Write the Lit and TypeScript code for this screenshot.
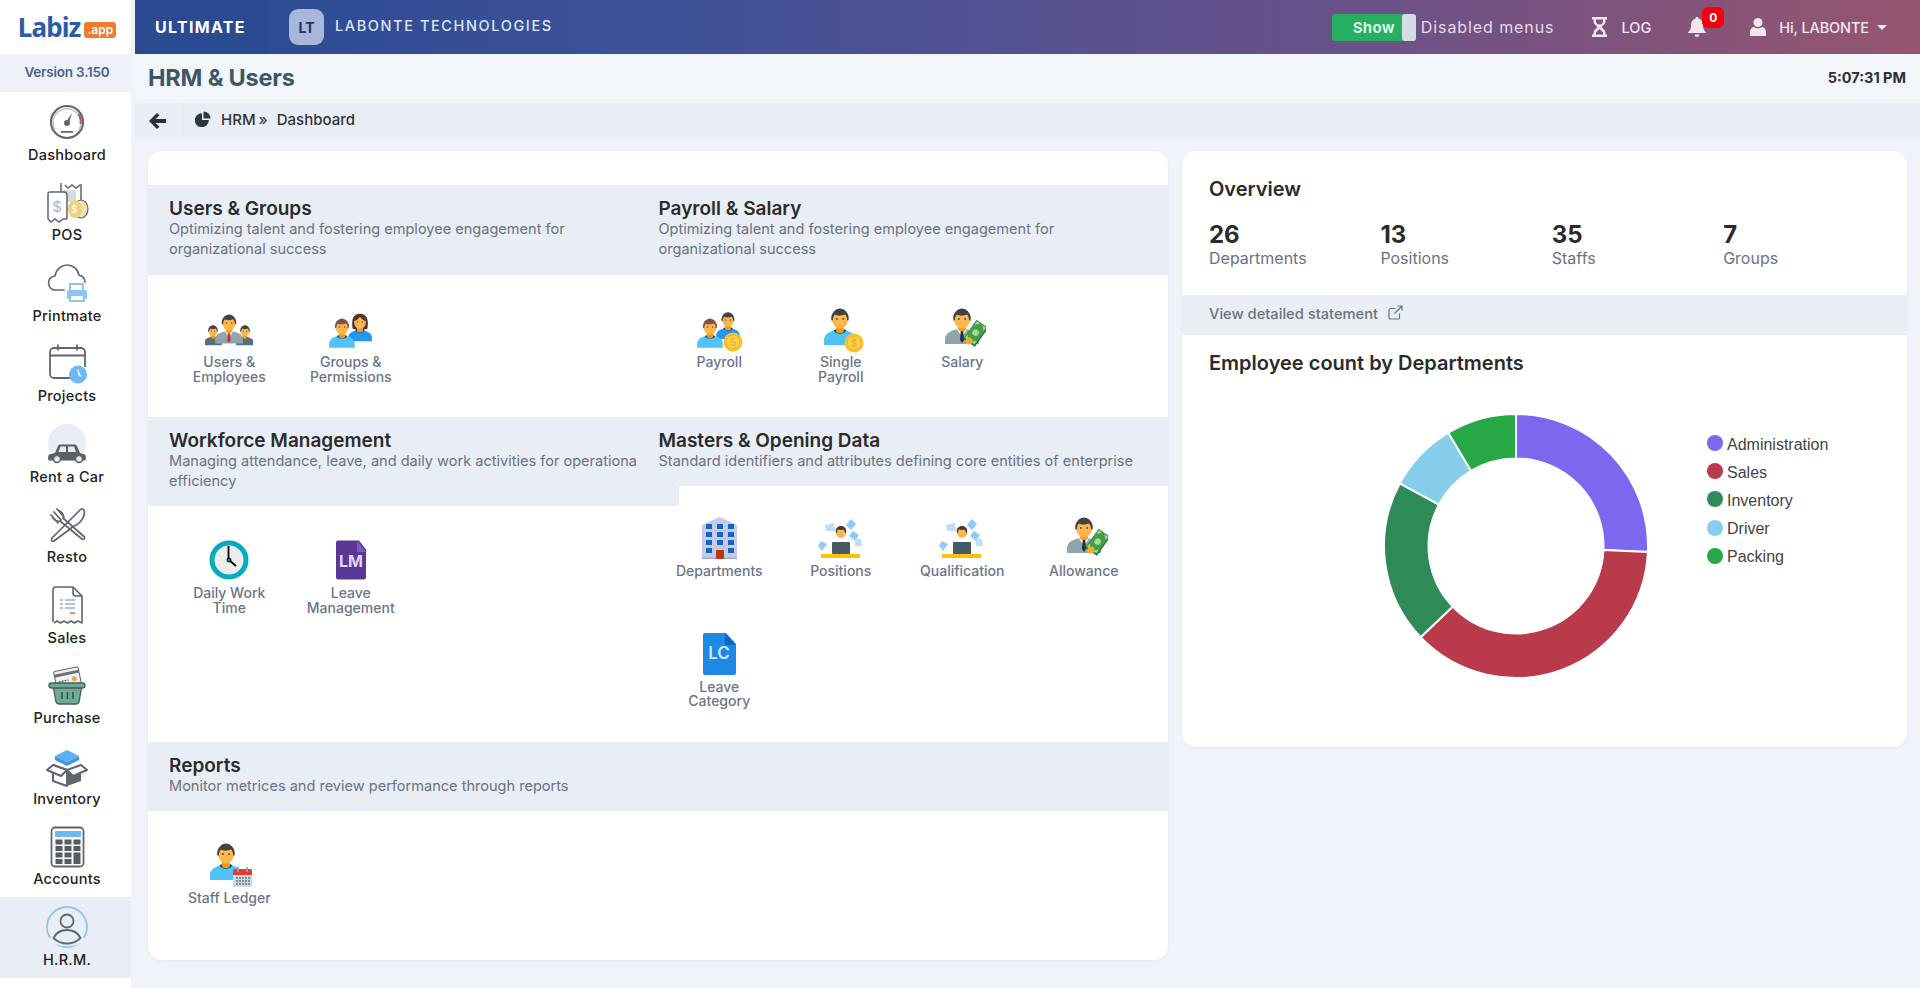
import { LitElement, html, svg, css } from "lit";
import { customElement } from "lit/decorators.js";

const G = "#5f6670";

const person = (x: number, y: number, s: number, hair: string, shirt: string, collar: string, long = false) => svg`
<g transform="translate(${x} ${y}) scale(${s})">
  ${long ? svg`<path d="M-10 9 C-12 -4 -9 -11 0 -11 S12 -4 10 9 Q0 13 -10 9Z" fill="${hair}"/>` : ""}
  <path d="M-16 26v-5c0-7 8-10 16-10s16 3 16 10v5z" fill="${shirt}"/>
  <path d="M-6.5 11.3c1.5 4.5 11.5 4.5 13 0l-2-1h-9z" fill="${collar}"/>
  <rect x="-4" y="5" width="8" height="9" rx="3" fill="#ff9800"/>
  <ellipse cx="0" cy="0" rx="8" ry="9.5" fill="#ffb74d"/>
  ${long ? "" : svg`<path d="M-8.6 1.5C-10-6-4-10.5 0-10.5S10-6 8.6 1.5L7.2 1.5C7-2 5.8-3.8 5-4.5 1-3-3-3-5-4.5-6-3.5-7-2-7.2 1.5z" fill="${hair}"/>`}
  ${long ? svg`<path d="M-8 -1C-5 -2 -2 -4 0 -7 2 -4 5 -2 8 -1 8 -6 4 -10 0 -10 S-8 -6 -8 -1Z" fill="${hair}"/>` : ""}
  <circle cx="-3.2" cy="0" r="1" fill="#6d4c41"/><circle cx="3.2" cy="0" r="1" fill="#6d4c41"/>
</g>`;

const suitMan = (x: number, y: number, s: number, tie: string) => svg`
<g transform="translate(${x} ${y}) scale(${s})">
  <path d="M-17 25v-5c0-7 9-10 17-10s17 3 17 10v5z" fill="#90a4ae"/>
  <path d="M-5 10.5 0 18 5 10.5z" fill="#fff"/>
  <path d="M-1.3 12h2.6l.7 9-2 3-2-3z" fill="${tie}"/>
  <rect x="-4" y="4" width="8" height="8" rx="3" fill="#ff9800"/>
  <ellipse cx="0" cy="0" rx="8" ry="9.5" fill="#ffb74d"/>
  <path d="M-8.6 1.5C-10-6-4-10.5 0-10.5S10-6 8.6 1.5L7.2 1.5C7-2 5.8-3.8 5-4.5 1-3-3-3-5-4.5-6-3.5-7-2-7.2 1.5z" fill="#424242"/>
  <circle cx="-3.2" cy="0" r="1" fill="#6d4c41"/><circle cx="3.2" cy="0" r="1" fill="#6d4c41"/>
</g>`;

const coin = (x: number, y: number, t: string) => svg`
<circle cx="${x}" cy="${y}" r="9.5" fill="#fbc02d"/><circle cx="${x}" cy="${y}" r="6.8" fill="#ffd54f" stroke="#f9a825" stroke-width=".8"/>
<text x="${x}" y="${y + 3.6}" font-size="10" text-anchor="middle" fill="#f9a825" font-family="Inter, sans-serif" font-weight="600">${t}</text>`;

const money = svg`<g transform="translate(38 28) rotate(-55)">
  <rect x="-12" y="-7" width="23" height="14" fill="#1b5e20"/>
  <rect x="-11" y="-7" width="22" height="13" fill="#43a047"/>
  <circle cx="0" cy="-.5" r="3.200" fill="#a5d6a7"/>
  <path d="M-10-6h4l-4 4zM10-6H6l4 4zM-10 5h4l-4-4zM10 5H6l4-4z" fill="#a5d6a7"/></g>
  <circle cx="31" cy="36" r="3.500" fill="#ffa726"/>`;

const desk = svg`
<g fill="#90caf9"><path d="M8 11l9-2 1 8-9 0z" fill="#bbdefb"/><path d="M34 5l5 5-5 6-5-5z"/><path d="M36 17l6 4-4 6-6-5z"/><path d="M38 24l6 1 1 7-7 0z" fill="#bbdefb"/><path d="M4 27l6 3-5 7-4-5z" /></g>
<path d="M16 40v-6c0-4 4-5 8-5s8 1 8 5v6z" fill="#64a6d8"/>
<circle cx="24" cy="19" r="5" fill="#ffb74d"/><path d="M19 19c-1-5 2-7 5-7s6 2 5 7l-1 0c0-2-1-3-2-3.5-1.500.5-3 .5-5 0-1 .5-1 2-1 3.500z" fill="#4e342e"/>
<rect x="15" y="28" width="18" height="12" rx="1" fill="#455a64"/>
<rect x="4" y="40" width="39" height="4" fill="#ffc107"/>`;

const ICONS: Record<string, any> = {
  users: svg`${person(8, 26, .55, "#424242", "#546e7a", "#546e7a")}${person(40, 26, .55, "#424242", "#546e7a", "#546e7a")}${suitMan(24, 18, .82, "#d32f2f")}`,
  groups: svg`${person(33, 17, .74, "#4e342e", "#2196f3", "#0d47a1", true)}${person(15, 22, .8, "#795548", "#4fc3f7", "#01579b")}`,
  payroll: svg`${person(33, 15, .74, "#424242", "#2196f3", "#0d47a1")}${person(15, 22, .8, "#795548", "#4fc3f7", "#01579b")}${coin(38, 37, "5")}`,
  single: svg`${person(23, 14, 1, "#424242", "#4fc3f7", "#01579b")}${coin(37, 38, "$")}`,
  salary: svg`${suitMan(24, 14, 1, "#263238")}${money}`,
  dept: svg`<path d="M7 11 24.500 3 42 11v34H7z" fill="#c5cae9"/><rect x="7" y="43.500" width="35" height="1.500" fill="#9fa8da"/>
    ${[13, 21, 29, 37].map((y) => [11, 22, 33].map((x) => (y === 37 && x === 22 ? "" : svg`<rect x="${x}" y="${y - 3}" width="6" height="5" fill="#1565c0"/>`)))}
    <rect x="21" y="36" width="8" height="9" fill="#bf360c"/>`,
  desk,
  clock: svg`<circle cx="24" cy="24" r="17" fill="#eee" stroke="#00acc1" stroke-width="5"/><path d="M23.500 24V10M24 24l7 6" stroke="#000" stroke-width="1.800" fill="none"/><circle cx="24" cy="24" r="2" fill="#00838f" stroke="#000" stroke-width="1"/>`,
  lm: svg`<path d="M11 4.500h21l7 9v28a2 2 0 0 1-2 2H11a2 2 0 0 1-2-2v-35a2 2 0 0 1 2-2z" fill="#5b3695"/><path d="M30 4.500 39 16h-9z" fill="#7e57c2"/><text x="24" y="31" font-size="16" font-weight="700" fill="#e1d7f2" text-anchor="middle" font-family="Inter, sans-serif">LM</text>`,
  lc: svg`<path d="M10 3h21l10 11v29a2 2 0 0 1-2 2H10a2 2 0 0 1-2-2V5a2 2 0 0 1 2-2z" fill="#1e88e5"/><path d="M30 3 41 15H30z" fill="#1565c0"/><text x="24" y="29" font-size="17" font-weight="600" fill="#cfe8fc" text-anchor="middle" font-family="Inter, sans-serif">LC</text>`,
  ledger: svg`${person(21, 13, 1, "#424242", "#4fc3f7", "#01579b")}
    <rect x="28" y="28" width="19" height="18" rx="1.500" fill="#cfd8dc"/><path d="M28 34v-4.500a1.500 1.500 0 0 1 1.500-1.500h16a1.500 1.500 0 0 1 1.500 1.500V34z" fill="#e53935"/>
    <rect x="32" y="26" width="2" height="5" rx="1" fill="#90a4ae"/><rect x="41" y="26" width="2" height="5" rx="1" fill="#90a4ae"/>
    <g fill="#78909c">${[36, 39, 42].map((y) => [31, 34, 37, 40, 43].map((x) => svg`<rect x="${x}" y="${y}" width="2" height="2"/>`))}</g>`,
};

const NAV: Record<string, any> = {
  dash: svg`<circle cx="23" cy="23" r="16" fill="none" stroke="${G}" stroke-width="2.200"/><path d="M11 31A14 14 0 1 1 35 31" fill="none" stroke="#c5c9d0" stroke-width="1.500"/><path d="M34.500 15a14 14 0 0 1 2 10" fill="none" stroke="#c0504d" stroke-width="2"/><circle cx="23" cy="24" r="3" fill="${G}"/><path d="M22 23 28 14l-3 10z" fill="${G}"/><rect x="17" y="32" width="12" height="1.800" fill="${G}"/>`,
  pos: svg`<path d="M17 12V3M17 3M21 5l3 3 4-3 4 3 4-3 1 0v19" fill="none" stroke="${G}" stroke-width="1.500"/><rect x="19" y="10" width="13" height="12" fill="#d5dae3"/><path d="M4 39V14a2 2 0 0 1 2-2h14a3 3 0 0 1 3 3v24" fill="#fff" stroke="${G}" stroke-width="1.500"/><path d="M4 39l3 3 4-3 4 3 4-3 4 0" fill="none" stroke="${G}" stroke-width="1.500"/><text x="13" y="32" font-size="15" fill="#9dbbdd" text-anchor="middle" font-family="Inter, sans-serif">$</text><ellipse cx="37" cy="29" rx="7" ry="9" fill="#f0e2b0" stroke="${G}" stroke-width="1.200"/><ellipse cx="31" cy="29" rx="7" ry="9" fill="#f2cf7a"/><text x="30.500" y="33" font-size="10" fill="#fff" text-anchor="middle" font-family="Inter, sans-serif">$</text>`,
  print: svg`<path d="M20 30H12a7 7 0 0 1-1-14C12 9 18 5 23 5c6 0 11 4 12 10 3 1 6 3 6 7" fill="none" stroke="${G}" stroke-width="1.700" stroke-linecap="round"/><rect x="26" y="24" width="13" height="8" fill="none" stroke="#8cc4f2" stroke-width="2"/><rect x="23" y="30" width="20" height="9" rx="1.500" fill="#8cc4f2"/><rect x="26" y="35" width="14" height="6" fill="#fff" stroke="#8cc4f2" stroke-width="2"/>`,
  proj: svg`<path d="M36 37H10a4 4 0 0 1-4-4V11a4 4 0 0 1 4-4h27a4 4 0 0 1 4 4v15" fill="none" stroke="${G}" stroke-width="1.800"/><path d="M6 14.500H41M14 3.500v6M33 3.500v6" fill="none" stroke="${G}" stroke-width="1.800"/><circle cx="34" cy="33.500" r="9" fill="#6db9f5"/><path d="M34 28.500l1 5 2 2" fill="none" stroke="#fff" stroke-width="1.500"/>`,
  car: svg`<circle cx="23" cy="22" r="19" fill="#e9edf5"/><rect x="3" y="40" width="42" height="5" fill="#fff"/><path d="M11 32l3-7c.5-1 1-1.500 2.500-1.500h14c1.500 0 2 .5 2.500 1.500l3 7 5 1.500c1 1 1 5 .5 6H4.500c-.5-1-.5-5 .5-6z" fill="#5a6068"/><path d="M14.500 31l2-5.500h5.500V31zM24 25.500h6l2 5.500h-8z" fill="#e6e9ef"/><circle cx="13" cy="38" r="3.500" fill="#e6e9ef" stroke="#5a6068" stroke-width="1.500"/><circle cx="35" cy="38" r="3.500" fill="#e6e9ef" stroke="#5a6068" stroke-width="1.500"/>`,
  resto: svg`<g fill="none" stroke="${G}" stroke-width="1.700" stroke-linecap="round" stroke-linejoin="round"><path d="M7 13 14 21M10 10l7 8M13 7 20 15M8 14c2 4 5 6 8 5l22 18c1 1 3 0 2.500-2L19 16c1-3-1-6-5-8"/><path d="M40 8C42 14 36 22 30 24L10 39c-2 1-3.500-1-2-3L36 8c1-1.500 3-1.500 4 0z"/></g>`,
  sales: svg`<path d="M9 40V8a3 3 0 0 1 3-3h17l9 9v27l-4-2-3.500 2-3.500-2-3.500 2-3.500-2-3.500 2-3.500-2-3 2" fill="#fff" stroke="${G}" stroke-width="1.600" stroke-linejoin="round"/><path d="M29 5v6a3 3 0 0 0 3 3h6" fill="none" stroke="${G}" stroke-width="1.600"/><path d="M16 18h3M21 18h10M16 22h3M21 22h10M16 26h3M21 26h10" stroke="#8fb0d4" stroke-width="1.500"/><path d="M26 31h5" stroke="#e06070" stroke-width="1.500"/>`,
  purchase: svg`<g transform="rotate(-12 24 15)"><rect x="11" y="6" width="25" height="17" rx="1.500" fill="#f1f2f4" stroke="${G}" stroke-width="1"/><rect x="11" y="9" width="25" height="3" fill="#6b7078"/><path d="M14 17h10" stroke="#6b7078" stroke-width="1.500" stroke-dasharray="2 1"/><circle cx="30" cy="17" r="2.500" fill="#f2a33a"/></g><path d="M9 22h29l-3 17a3 3 0 0 1-3 2H15a3 3 0 0 1-3-2z" fill="#6fa998" stroke="#4c5a5a" stroke-width="1.300"/><rect x="5" y="20" width="36" height="5" rx="2.500" fill="#6fa998" stroke="#4c5a5a" stroke-width="1.300"/><path d="M18 29v7M23.500 29v7M29 29v7" stroke="#33504a" stroke-width="1.500"/>`,
  inv: svg`<path d="M23 7 35 13 23 19 11 13z" fill="#5db1f3"/><path d="M11 13l12 6 12-6v4l-12 6-12-6z" fill="#3d97dc"/><path d="M9 22v16l14 5V27z" fill="#fff" stroke="${G}" stroke-width="2" stroke-linejoin="round"/><path d="M37 22v16l-14 5V27z" fill="${G}"/><path d="M9 22l-6 5 14 6 6-6zM37 22l6 5-14 6-6-6z" fill="#fff" stroke="${G}" stroke-width="2" stroke-linejoin="round"/>`,
  acc: svg`<rect x="7.500" y="3.500" width="32" height="39" rx="3.500" fill="#fff" stroke="${G}" stroke-width="1.800"/><rect x="11" y="7" width="26" height="6" fill="#6db9f5"/>
    <g fill="#555b63">${[15.500, 22, 28.500, 35].map((y, r) => [11.500, 20.500, 29.500].map((x, c) => (c === 2 && r > 1 ? "" : svg`<rect x="${x}" y="${y}" width="7" height="5"/>`)))}<rect x="29.500" y="28.500" width="7" height="11.500"/></g>`,
  hrm: svg`<circle cx="23" cy="23" r="20" fill="none" stroke="#8cc4f2" stroke-width="1.800"/><path d="M6 34c6 9 28 9 34 0" fill="none" stroke="#e9edf6" stroke-width="3"/><circle cx="23" cy="17" r="6.500" fill="none" stroke="${G}" stroke-width="1.800"/><path d="M9.500 34C13 27 18 26 23 26s10 1 13.500 8c-3 3-8.500 5.500-13.500 5.500S12.500 37 9.500 34z" fill="none" stroke="${G}" stroke-width="1.800"/>`,
};

const navItems = [
  ["dash", "Dashboard"], ["pos", "POS"], ["print", "Printmate"], ["proj", "Projects"], ["car", "Rent a Car"],
  ["resto", "Resto"], ["sales", "Sales"], ["purchase", "Purchase"], ["inv", "Inventory"], ["acc", "Accounts"], ["hrm", "H.R.M."],
];

const slices = [
  { name: "Administration", v: 9, c: "#7b68ee" },
  { name: "Sales", v: 13, c: "#b83a4b" },
  { name: "Inventory", v: 7, c: "#2e8b57" },
  { name: "Driver", v: 3, c: "#87ceeb" },
  { name: "Packing", v: 3, c: "#28a745" },
];

function donut() {
  const R = 132, r = 87.5, cx = 133, cy = 133;
  const total = slices.reduce((a, s) => a + s.v, 0);
  let ang = -Math.PI / 2;
  return slices.map((s) => {
    const a0 = ang, a1 = ang + (s.v / total) * Math.PI * 2;
    ang = a1;
    const p = (rad: number, a: number) => `${(cx + rad * Math.cos(a)).toFixed(2)} ${(cy + rad * Math.sin(a)).toFixed(2)}`;
    const large = a1 - a0 > Math.PI ? 1 : 0;
    const d = `M${p(R, a0)}A${R} ${R} 0 ${large} 1 ${p(R, a1)}L${p(r, a1)}A${r} ${r} 0 ${large} 0 ${p(r, a0)}Z`;
    return svg`<path d="${d}" fill="${s.c}" stroke="#fff" stroke-width="2"/>`;
  });
}

const tile = (icon: string, lines: string[]) => html`
  <div class="tile">
    <svg class="ti" viewBox="0 0 48 48">${ICONS[icon]}</svg>
    <div class="tl">${lines.map((l, i) => html`${i ? html`<br />` : ""}${l}`)}</div>
  </div>`;

const head = (title: string, desc: string, extra = "") => html`
  <div class="shead ${extra}"><h3>${title}</h3><p>${desc}</p></div>`;

@customElement("app-root")
export class AppRoot extends LitElement {
  static styles = css`
    :host { display: block; height: 988px; overflow: hidden; background: #f0f3f9; font-family: Inter, "Liberation Sans", sans-serif; color: #222; }
    .shell { display: flex; height: 988px; }
    .side { width: 131px; flex: none; background: #fff; display: flex; flex-direction: column; }
    .logo { height: 54px; flex: none; display: flex; align-items: center; justify-content: center; gap: 4px; padding-left: 3px; box-sizing: border-box; }
    .logo b { font: 700 26px/1 "Noto Sans", Inter, sans-serif; color: #2a5ca8; letter-spacing: -0.9px; }
    .logo span { background: #f07a2e; color: #fff; font: 600 12px/15px Inter, sans-serif; padding: 0 3px 1px; border-radius: 3px; margin-top: 5px; }
    .ver { height: 38px; flex: none; background: #eef2f8; color: #4a6288; font-size: 13.5px; font-weight: 600; display: flex; align-items: center; justify-content: center; letter-spacing: -0.2px; padding: 0 0 2px 3px; box-sizing: border-box; }
    .nav { height: 80.5px; flex: none; padding: 7px 0 0 3px; box-sizing: border-box; display: flex; flex-direction: column; align-items: center; }
    .nav.on { background: #e9edf6; }
    .nav svg { width: 46px; height: 46px; flex: none; }
    .nav span { font-size: 14.5px; line-height: 18px; font-weight: 500; margin-top: .5px; color: #222; letter-spacing: 0.25px; }
    .main { flex: 1; margin-left: 4px; min-width: 0; display: flex; flex-direction: column; }
    .top { height: 54px; flex: none; display: flex; align-items: center; color: #fff; background: linear-gradient(90deg, #284a92 0%, #3c5199 28%, #6a5189 68%, #96556f 100%); }
    .ult { width: 133px; height: 54px; background: #2a4b92; display: flex; align-items: center; padding-left: 20px; box-sizing: border-box; font-weight: 700; font-size: 16px; letter-spacing: 1.3px; }
    .av { width: 35px; height: 36px; margin-left: 21px; border-radius: 9px; background: #a9b7da; color: #1d3566; font-weight: 700; font-size: 14px; display: flex; align-items: center; justify-content: center; }
    .co { margin-left: 11px; margin-bottom: 4px; font-size: 14.5px; font-weight: 500; letter-spacing: 1.6px; color: #dfe4f2; }
    .right { margin-left: auto; padding-right: 33px; display: flex; align-items: center; }
    .tog { width: 84px; height: 27px; background: #27ae60; border-radius: 3px; display: flex; justify-content: flex-end; align-items: center; }
    .tog b { font-size: 15px; font-weight: 700; color: #d8f5e3; margin-right: 7px; letter-spacing: 0.3px; }
    .tog i { width: 14px; height: 27px; background: #d5dce5; border-radius: 3px; }
    .dm { margin-left: 5px; font-size: 16px; letter-spacing: 0.92px; color: #e6dbe8; }
    .hg { margin-left: 37px; width: 17px; height: 20px; }
    .log { margin-left: 13px; font-size: 14.5px; font-weight: 500; color: #f1e8ef; }
    .bell { position: relative; margin-left: 37px; width: 18px; height: 20px; }
    .bell svg { width: 18px; height: 20px; display: block; }
    .badge { position: absolute; left: 14px; top: -10px; width: 22px; height: 21px; background: #f5000a; border-radius: 6px; font-size: 12px; font-weight: 700; display: flex; align-items: center; justify-content: center; color: #fff; }
    .usr { margin-left: 44px; width: 16px; height: 18px; }
    .hi { margin-left: 13px; font-size: 14.5px; font-weight: 500; color: #f1e8ef; letter-spacing: -0.1px; }
    .car { margin-left: 8px; width: 0; height: 0; border: 5px solid transparent; border-top: 5px solid #f1e8ef; border-bottom: 0; }
    .ph { height: 49px; flex: none; background: #f2f5fa; display: flex; align-items: center; justify-content: space-between; padding: 0 14px 3px 13px; box-sizing: border-box; }
    .ph h1 { margin: 0; font-size: 23.5px; font-weight: 700; color: #3f5568; letter-spacing: -0.2px; }
    .ph time { font-size: 14.5px; font-weight: 700; color: #2b2f36; }
    .bc { height: 35px; flex: none; background: #e9edf6; display: flex; align-items: stretch; font-size: 15px; font-weight: 500; color: #333; }
    .back { width: 43px; display: flex; align-items: center; justify-content: center; border-right: 2px solid #f0f3f9; }
    .back svg { width: 17px; height: 16px; margin-left: 1px; }
    .crumbs { display: flex; align-items: center; padding: 0 0 3px 15px; }
    .crumbs svg { width: 16px; height: 16px; margin-right: 10px; }
    .crumbs em { font-style: normal; margin: 0 9px 0 3px; font-size: 15px; color: #444; }
    .body { flex: 1; display: flex; align-items: flex-start; gap: 14px; padding: 13px 13px 0; }
    .card { background: #fff; border-radius: 14px; box-shadow: 0 1px 3px rgba(60, 80, 120, 0.08); }
    .lcard { width: 1020px; height: 809px; flex: none; padding-top: 34px; box-sizing: border-box; overflow: hidden; }
    .row { display: grid; grid-template-columns: 489px 531px; }
    .row1 { height: 232px; }
    .row2 { height: 325px; }
    .col { min-width: 0; }
    .col.r { position: relative; }
    .shead { background: #e9edf6; padding: 12.5px 20px 0 21px; box-sizing: border-box; }
    .col.r .shead { padding-left: 21.5px; }
    .shead h3 { margin: 0; font-size: 19px; line-height: 21px; font-weight: 600; color: #2b2b2b; }
    .shead p { margin: 0; font-size: 14.55px; line-height: 20.5px; color: #6b7280; }
    .h90 { height: 90px; }
    .h89 { height: 89px; width: 531px; }
    .h69 { height: 69px; }
    .grid { display: grid; grid-template-columns: repeat(4, 121.5px); padding: 30px 0 0 20.5px; grid-auto-rows: 115.5px; }
    .col.r .grid { padding-left: 21.5px; }
    .grid.m { padding-top: 28px; }
    .tile { display: flex; flex-direction: column; align-items: center; }
    .ti { width: 48px; height: 48px; flex: none; }
    .tl { margin-top: 2px; font-size: 14px; line-height: 14.5px; font-weight: 500; color: #6b7588; text-align: center; }
    .rcard { width: 725px; height: 596px; flex: none; overflow: hidden; }
    .rcard h2 { margin: 0; font-size: 20px; line-height: 24px; font-weight: 600; color: #2b2b2b; padding-left: 27px; }
    .ov { padding-top: 25.5px; }
    .stats { display: grid; grid-template-columns: repeat(4, 171.4px); padding-left: 27px; margin-top: 20.5px; }
    .stats b { display: block; font-size: 24px; line-height: 28px; font-weight: 700; color: #2b2b2b; }
    .stats span { display: block; font-size: 16px; line-height: 19px; color: #6b7280; }
    .view { margin-top: 27px; height: 40px; background: #e9eff5; display: flex; align-items: center; padding: 0 0 3px 27px; box-sizing: border-box; font-size: 14.7px; font-weight: 500; color: #6b7280; gap: 10px; }
    .view svg { width: 15px; height: 15px; margin-bottom: 2px; }
    .emp { padding-top: 16px; }
    .chart { display: flex; padding: 37.5px 0 0 200.5px; align-items: flex-start; }
    .chart > svg { width: 266px; height: 266px; flex: none; }
    .leg { margin: 18px 0 0 58.5px; font: 16px/28.2px "Liberation Sans", Arial, sans-serif; color: #444; }
    .leg div { display: flex; align-items: center; gap: 4px; height: 28.2px; }
    .leg i { width: 16px; height: 16px; border-radius: 50%; margin-bottom: 3px; }
  `;

  render() {
    return html`
      <div class="shell">
        <aside class="side">
          <div class="logo"><b>Labiz</b><span>.app</span></div>
          <div class="ver">Version 3.150</div>
          ${navItems.map(([k, l]) => html`<div class="nav ${k === "hrm" ? "on" : ""}"><svg viewBox="0 0 46 46">${NAV[k]}</svg><span>${l}</span></div>`)}
        </aside>
        <div class="main">
          <header class="top">
            <div class="ult">ULTIMATE</div>
            <div class="av">LT</div>
            <div class="co">LABONTE TECHNOLOGIES</div>
            <div class="right">
              <div class="tog"><b>Show</b><i></i></div>
              <span class="dm">Disabled menus</span>
              <svg class="hg" viewBox="0 0 17 20"><path d="M1 0h15v2.500h-1.500v2c0 2.500-2.500 4-4 5.500 1.500 1.500 4 3 4 5.500v2H16V20H1v-2.500h1.500v-2c0-2.500 2.500-4 4-5.500-1.500-1.500-4-3-4-5.500v-2H1zM5 2.500v2c0 1 .8 2 1.500 2.700h4C11.200 6.500 12 5.500 12 4.500v-2zM8.500 12 5 15.500v2h7v-2z" fill="#efe6ee"/></svg>
              <span class="log">LOG</span>
              <div class="bell"><svg viewBox="0 0 18 20"><path d="M9 0c1 0 1.500.7 1.500 1.500C13.500 2.200 15 5 15 8c0 4 1 5.500 3 7.500V16H0v-.5C2 13.500 3 12 3 8c0-3 1.500-5.800 4.500-6.500C7.500.7 8 0 9 0zM6.500 17.500h5a2.500 2.500 0 0 1-5 0z" fill="#f1e6ee"/></svg><span class="badge">0</span></div>
              <svg class="usr" viewBox="0 0 16 18"><circle cx="8" cy="4.500" r="4.500" fill="#f1e6ee"/><path d="M0 18v-4c0-3 2-5 4-5 1 .8 2.500 1.300 4 1.300s3-.5 4-1.300c2 0 4 2 4 5v4z" fill="#f1e6ee"/></svg>
              <span class="hi">Hi, LABONTE</span>
              <i class="car"></i>
            </div>
          </header>
          <div class="ph"><h1>HRM &amp; Users</h1><time>5:07:31 PM</time></div>
          <nav class="bc">
            <div class="back"><svg viewBox="0 0 17 16"><path d="M8 0l2.500 2.300L6.500 6H17v4H6.500l4 3.700L8 16 0 8z" fill="#2b2f36"/></svg></div>
            <div class="crumbs">
              <svg viewBox="0 0 16 16"><path d="M7 2.200A7 7 0 1 0 13.800 9H7z" fill="#2f3640"/><path d="M8.500 .5V7.500H15.500A7 7 0 0 0 8.500 .5z" fill="#2f3640"/></svg>
              <span>HRM</span><em>»</em><span>Dashboard</span>
            </div>
          </nav>
          <div class="body">
            <section class="card lcard">
              <div class="row row1">
                <div class="col">
                  ${head("Users & Groups", "Optimizing talent and fostering employee engagement for organizational success", "h90")}
                  <div class="grid">${tile("users", ["Users &", "Employees"])}${tile("groups", ["Groups &", "Permissions"])}</div>
                </div>
                <div class="col r">
                  ${head("Payroll & Salary", "Optimizing talent and fostering employee engagement for organizational success", "h90")}
                  <div class="grid">${tile("payroll", ["Payroll"])}${tile("single", ["Single", "Payroll"])}${tile("salary", ["Salary"])}</div>
                </div>
              </div>
              <div class="row row2">
                <div class="col">
                  ${head("Workforce Management", "Managing attendance, leave, and daily work activities for operational efficiency", "h89")}
                  <div class="grid">${tile("clock", ["Daily Work", "Time"])}${tile("lm", ["Leave", "Management"])}</div>
                </div>
                <div class="col r">
                  ${head("Masters & Opening Data", "Standard identifiers and attributes defining core entities of enterprise", "h69")}
                  <div class="grid m">
                    ${tile("dept", ["Departments"])}${tile("desk", ["Positions"])}${tile("desk", ["Qualification"])}${tile("salary", ["Allowance"])}${tile("lc", ["Leave", "Category"])}
                  </div>
                </div>
              </div>
              ${head("Reports", "Monitor metrices and review performance through reports", "h69")}
              <div class="grid">${tile("ledger", ["Staff Ledger"])}</div>
            </section>
            <section class="card rcard">
              <div class="ov"><h2>Overview</h2></div>
              <div class="stats">
                <div><b>26</b><span>Departments</span></div>
                <div><b>13</b><span>Positions</span></div>
                <div><b>35</b><span>Staffs</span></div>
                <div><b>7</b><span>Groups</span></div>
              </div>
              <div class="view">View detailed statement
                <svg viewBox="0 0 15 15"><path d="M11.500 8.500v4a1.500 1.500 0 0 1-1.500 1.500H2.500A1.500 1.500 0 0 1 1 12.500V5a1.500 1.500 0 0 1 1.500-1.500h5M9.500 1H14v4.500M14 1 6.500 8.500" fill="none" stroke="#6b7280" stroke-width="1.200"/></svg>
              </div>
              <div class="emp"><h2>Employee count by Departments</h2></div>
              <div class="chart">
                <svg viewBox="0 0 266 266">${donut()}</svg>
                <div class="leg">${slices.map((s) => html`<div><i style="background:${s.c}"></i>${s.name}</div>`)}</div>
              </div>
            </section>
          </div>
        </div>
      </div>
    `;
  }
}
